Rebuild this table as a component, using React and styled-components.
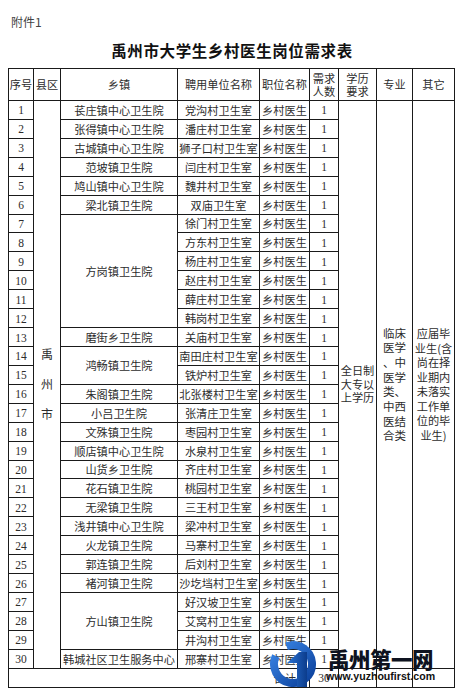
import React from 'react';
import styled, { createGlobalStyle } from 'styled-components';

const GlobalStyle = createGlobalStyle`
  html, body {
    margin: 0;
    padding: 0;
    background: #fff;
  }
  body {
    font-family: "Noto Sans CJK SC", "Liberation Serif", serif;
    color: #2a2a2a;
  }
`;

const Page = styled.div`
  position: relative;
  width: 464px;
  height: 699px;
  overflow: hidden;
  background: #fff;
  padding-top: 14px;
  box-sizing: border-box;
`;

const Attachment = styled.div`
  padding-left: 11px;
  font-size: 12px;
  line-height: 16px;
  color: #444;
`;

const Title = styled.h1`
  margin: 10px 0 0;
  text-align: center;
  font-size: 15.5px;
  line-height: 20px;
  font-weight: 700;
  letter-spacing: 0.6px;
  color: #111;
`;

const Table = styled.table`
  margin: 8px 0 0 8px;
  width: 446px;
  table-layout: fixed;
  border-collapse: collapse;
  font-size: 11.2px;
  color: #2c2c2c;
`;

const Row = styled.tr`
  height: ${p => p.$h}px;
`;

const Cell = styled.td`
  border: 1px solid #1a1a1a;
  padding: 0;
  text-align: ${p => p.$align || 'center'};
  vertical-align: middle;
  line-height: ${p => p.$lh || 14}px;
  white-space: nowrap;
  overflow: hidden;
  padding-right: ${p => p.$pr || 0}px;
`;

const HeadCell = styled(Cell).attrs({ as: 'th' })`
  font-weight: 400;
  line-height: 12.5px;
`;

const Num = styled.span`
  font-family: "Liberation Serif", serif;
  font-size: 11.5px;
`;

const Stack = styled.div`
  display: flex;
  flex-direction: column;
  align-items: center;
  line-height: ${p => p.$lh}px;
  font-size: ${p => p.$fs || 11.2}px;
`;

const Watermark = styled.div`
  position: absolute;
  left: 268px;
  top: 639px;
  display: flex;
  align-items: flex-start;
  pointer-events: none;
`;

const Brand = styled.div`
  display: flex;
  flex-direction: column;
  margin-left: 10px;
  margin-top: 9px;
`;

const BrandName = styled.div`
  font-family: "Noto Sans CJK SC", sans-serif;
  font-weight: 900;
  font-size: 21.5px;
  line-height: 22px;
  color: #0e1320;
  letter-spacing: -0.5px;
`;

const BrandUrl = styled.div`
  font-family: "Liberation Sans", Arial, sans-serif;
  font-weight: 700;
  font-size: 10.6px;
  line-height: 12px;
  color: #111;
  margin-left: -2px;
`;

const groups = [
  { town: '苌庄镇中心卫生院', units: ['党沟村卫生室'] },
  { town: '张得镇中心卫生院', units: ['潘庄村卫生室'] },
  { town: '古城镇中心卫生院', units: ['狮子口村卫生室'] },
  { town: '范坡镇卫生院', units: ['闫庄村卫生室'] },
  { town: '鸠山镇中心卫生院', units: ['魏井村卫生室'] },
  { town: '梁北镇卫生院', units: ['双庙卫生室'] },
  {
    town: '方岗镇卫生院',
    units: ['徐门村卫生室', '方东村卫生室', '杨庄村卫生室', '赵庄村卫生室', '薛庄村卫生室', '韩岗村卫生室'],
  },
  { town: '磨街乡卫生院', units: ['关庙村卫生室'] },
  { town: '鸿畅镇卫生院', units: ['南田庄村卫生室', '铁炉村卫生室'] },
  { town: '朱阁镇卫生院', units: ['北张楼村卫生室'] },
  { town: '小吕卫生院', units: ['张清庄卫生室'] },
  { town: '文殊镇卫生院', units: ['枣园村卫生室'] },
  { town: '顺店镇中心卫生院', units: ['水泉村卫生室'] },
  { town: '山货乡卫生院', units: ['齐庄村卫生室'] },
  { town: '花石镇卫生院', units: ['桃园村卫生室'] },
  { town: '无梁镇卫生院', units: ['三王村卫生室'] },
  { town: '浅井镇中心卫生院', units: ['梁冲村卫生室'] },
  { town: '火龙镇卫生院', units: ['马寨村卫生室'] },
  { town: '郭连镇卫生院', units: ['后刘村卫生室'] },
  { town: '褚河镇卫生院', units: ['沙圪垱村卫生室'] },
  { town: '方山镇卫生院', units: ['好汉坡卫生室', '艾窝村卫生室', '井沟村卫生室'] },
  { town: '韩城社区卫生服务中心', units: ['邢寨村卫生室'] },
];

const rows = [];
groups.forEach(g => {
  g.units.forEach((u, i) => {
    rows.push({ town: g.town, unit: u, span: i === 0 ? g.units.length : 0 });
  });
});

const cols = [25, 27, 117, 82, 50, 29, 38, 36, 42];

const Lines = ({ items, lh, fs }) => (
  <Stack $lh={lh} $fs={fs}>
    {items.map((t, i) => (
      <span key={i}>{t}</span>
    ))}
  </Stack>
);

const Logo = () => (
  <svg width="50" height="52" viewBox="0 0 50 52">
    <defs>
      <linearGradient id="ring" x1="0" y1="0" x2="1" y2="1">
        <stop offset="0" stopColor="#3a86e6" />
        <stop offset="1" stopColor="#0b3f9a" />
      </linearGradient>
      <linearGradient id="bar" x1="0" y1="0" x2="1" y2="0">
        <stop offset="0" stopColor="#2a74d6" />
        <stop offset="1" stopColor="#0c3c8c" />
      </linearGradient>
    </defs>
    <path
      d="M18.5 7.2 A19 19 0 1 1 7.8 17"
      fill="none"
      stroke="url(#ring)"
      strokeWidth="8"
    />
    <path d="M19 24 L31 13 L39 13 L39 48 L29 48 L29 24 Z" fill="url(#bar)" />
  </svg>
);

export default function App() {
  return (
    <Page>
      <GlobalStyle />
      <Attachment>附件1</Attachment>
      <Title>禹州市大学生乡村医生岗位需求表</Title>
      <Table>
        <colgroup>
          {cols.map((w, i) => (
            <col key={i} style={{ width: w }} />
          ))}
        </colgroup>
        <thead>
          <Row $h={32}>
            <HeadCell>序号</HeadCell>
            <HeadCell>县区</HeadCell>
            <HeadCell>乡镇</HeadCell>
            <HeadCell>聘用单位名称</HeadCell>
            <HeadCell>职位名称</HeadCell>
            <HeadCell>
              <Lines items={['需求', '人数']} lh={12.5} />
            </HeadCell>
            <HeadCell>
              <Lines items={['学历', '要求']} lh={12.5} />
            </HeadCell>
            <HeadCell>专业</HeadCell>
            <HeadCell>其它</HeadCell>
          </Row>
        </thead>
        <tbody>
          {rows.map((r, i) => (
            <Row key={i} $h={18.93}>
              <Cell>
                <Num>{i + 1}</Num>
              </Cell>
              {i === 0 && (
                <Cell rowSpan={30}>
                  <Lines items={['禹', '州', '市']} lh={30} fs={12} />
                </Cell>
              )}
              {r.span > 0 && <Cell rowSpan={r.span}>{r.town}</Cell>}
              <Cell>{r.unit}</Cell>
              <Cell>乡村医生</Cell>
              <Cell>
                <Num>1</Num>
              </Cell>
              {i === 0 && (
                <>
                  <Cell rowSpan={30}>
                    <Lines items={['全日制', '大专以', '上学历']} lh={13.4} />
                  </Cell>
                  <Cell rowSpan={30}>
                    <Lines
                      items={['临床', '医学', '、中', '医学', '类、', '中西', '医结', '合类']}
                      lh={14.7}
                      fs={11.5}
                    />
                  </Cell>
                  <Cell rowSpan={30}>
                    <Lines
                      items={['应届毕', '业生(含', '尚在择', '业期内', '未落实', '工作单', '位的毕', '业生)']}
                      lh={14.5}
                    />
                  </Cell>
                </>
              )}
            </Row>
          ))}
          <Row $h={19}>
            <Cell colSpan={5} $align="right" $pr={13}>
              合计
            </Cell>
            <Cell>
              <Num>30</Num>
            </Cell>
            <Cell />
            <Cell />
            <Cell />
          </Row>
        </tbody>
      </Table>
      <Watermark>
        <Logo />
        <Brand>
          <BrandName>禹州第一网</BrandName>
          <BrandUrl>www.yuzhoufirst.com</BrandUrl>
        </Brand>
      </Watermark>
    </Page>
  );
}
